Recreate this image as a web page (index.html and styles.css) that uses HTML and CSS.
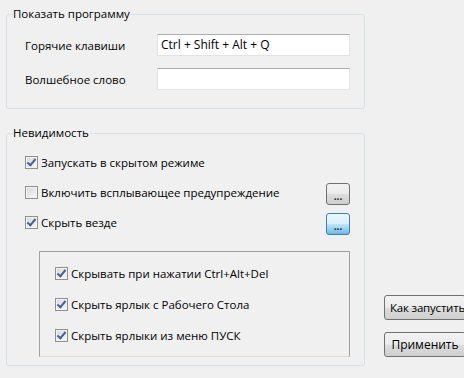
FILE: index.html
```html
<!DOCTYPE html>
<html lang="ru">
<head>
  <meta charset="UTF-8">
  <title>Настройки</title>
  <link rel="stylesheet" href="styles.css">
</head>
<body>
  <div class="page">
    <div class="left">
      <fieldset class="group group-show">
        <legend>Показать программу</legend>
        <div class="field-row">
          <label class="field-label">Горячие клавиши</label>
          <input class="field-input" type="text" value="Ctrl + Shift + Alt + Q">
        </div>
        <div class="field-row">
          <label class="field-label">Волшебное слово</label>
          <input class="field-input" type="text" value="">
        </div>
      </fieldset>

      <fieldset class="group group-hide">
        <legend>Невидимость</legend>
        <div class="check-row">
          <span class="check checked"></span>
          <span>Запускать в скрытом режиме</span>
        </div>
        <div class="check-row">
          <span class="check"></span>
          <span class="grow">Включить всплывающее предупреждение</span>
          <button class="dots">...</button>
        </div>
        <div class="check-row">
          <span class="check checked"></span>
          <span class="grow">Скрыть везде</span>
          <button class="dots dots-active">...</button>
        </div>

        <div class="inner-box">
          <div class="check-row small">
            <span class="check checked"></span>
            <span>Скрывать при нажатии Ctrl+Alt+Del</span>
          </div>
          <div class="check-row small">
            <span class="check checked"></span>
            <span>Скрыть ярлык с Рабочего Стола</span>
          </div>
          <div class="check-row small">
            <span class="check checked"></span>
            <span>Скрыть ярлыки из меню ПУСК</span>
          </div>
        </div>
      </fieldset>
    </div>

    <div class="right">
      <button class="btn btn-left">Как запустить</button>
      <button class="btn">Применить</button>
    </div>
  </div>
</body>
</html>
```

FILE: styles.css
```css
body {
  margin: 0;
  background: #f0f0f0;
  font-family: 'Open Sans', 'Liberation Sans', sans-serif;
  font-size: 11.5px;
  color: #000;
  overflow: hidden;
  width: 464px;
  height: 378px;
}

.page {
  display: flex;
  align-items: flex-end;
  width: 520px;
}

.left {
  width: 359px;
  margin-left: 6px;
}

.group {
  box-sizing: border-box;
  width: 359px;
  margin: 0;
  padding: 0 14px 0 18px;
  border: 1px solid #d5dfe5;
  border-radius: 3px;
  min-width: 0;
}

.group legend {
  margin-left: -12px;
  padding: 0 1px 0 0;
  line-height: 16px;
  height: 16px;
}

.group-show {
  margin-top: 6px;
  padding-top: 12px;
  padding-bottom: 18px;
}

.group-hide {
  margin-top: 16px;
  padding-top: 10px;
  padding-bottom: 8px;
}

.field-row {
  display: flex;
  align-items: center;
  height: 22px;
}

.field-row + .field-row {
  margin-top: 12px;
}

.field-label {
  width: 132px;
  padding-top: 1px;
}

.field-input {
  box-sizing: border-box;
  width: 193px;
  height: 22px;
  margin: 0;
  padding: 0 3px 1px;
  border: 1px solid #e2e3ea;
  border-top-color: #abadb3;
  background: #fff;
  font: inherit;
  font-size: 12px;
  color: #000;
  outline: none;
}

.check-row {
  display: flex;
  align-items: center;
  height: 22px;
}

.check-row + .check-row {
  margin-top: 8px;
}

.grow {
  flex: 1;
}

.check {
  box-sizing: border-box;
  width: 13px;
  height: 13px;
  margin-right: 3px;
  border: 1px solid #8e8f8f;
  background: linear-gradient(135deg, #d8d8d8, #f8f8f8);
  box-shadow: inset 0 0 0 1px #f4f4f4;
  position: relative;
  flex: none;
}

.check.checked::after {
  content: '';
  position: absolute;
  left: 3px;
  top: 0;
  width: 3px;
  height: 7px;
  border: solid #4a5f97;
  border-width: 0 2px 2px 0;
  transform: rotate(40deg);
}

.dots {
  box-sizing: border-box;
  width: 24px;
  height: 22px;
  margin: 4px 0 0;
  padding: 4px 0 0;
  border: 1px solid #707070;
  border-radius: 3px;
  background: linear-gradient(#f2f2f2, #ebebeb 50%, #dddddd 51%, #cfcfcf);
  font: inherit;
  font-size: 10px;
  font-weight: bold;
  line-height: 10px;
  color: #222;
}

.dots-active {
  border-color: #3c7fb1;
  background: linear-gradient(#eaf6fd, #d9f0fc 50%, #bee6fd 51%, #6fb9e6);
}

.inner-box {
  margin: 18px 0 0 14px;
  width: 311px;
  box-sizing: border-box;
  border: 1px solid #a0a0a0;
  border-bottom-color: #dcdcdc;
  padding: 13px 0 13px 15px;
}

.check-row.small {
  height: 16px;
}

.check-row.small + .check-row.small {
  margin-top: 15px;
}

.right {
  display: flex;
  flex-direction: column;
  gap: 12px;
  margin-left: 19px;
  margin-bottom: 9px;
}

.btn {
  box-sizing: border-box;
  width: 82px;
  height: 25px;
  padding: 0;
  border: 1px solid #707070;
  border-radius: 3px;
  background: linear-gradient(#f2f2f2, #ebebeb 50%, #dddddd 51%, #cfcfcf);
  font: inherit;
  font-size: 12px;
  color: #000;
  white-space: nowrap;
}

.btn-left {
  text-align: left;
  padding-left: 5px;
  font-size: 11.5px;
  letter-spacing: -0.2px;
  overflow: hidden;
}
```
